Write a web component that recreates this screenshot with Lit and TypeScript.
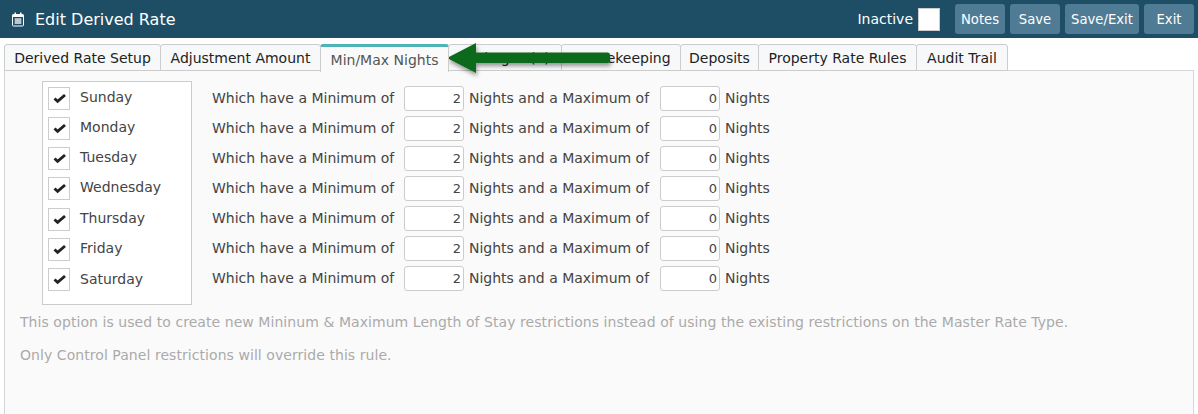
import { LitElement, html, css, svg } from "lit";
import { customElement } from "lit/decorators.js";

const days = ["Sunday", "Monday", "Tuesday", "Wednesday", "Thursday", "Friday", "Saturday"];
const tabs: [string, number][] = [["Derived Rate Setup", 157], ["Adjustment Amount", 161], ["Min/Max Nights", 129], ["Packages (1)", 114], ["Housekeeping", 120], ["Deposits", 79], ["Property Rate Rules", 159], ["Audit Trail", 92]];

@customElement("app-root")
export class AppRoot extends LitElement {
  static styles = css`
    :host { display: block; height: 414px; overflow: hidden; background: #fff; position: relative; font-family: "DejaVu Sans", Verdana, sans-serif; font-size: 14px; color: #333; }
    .header { height: 38px; background: #1d4e66; display: flex; align-items: center; color: #fff; padding: 0 4px 0 11px; box-sizing: border-box; }
    .cal { width: 14px; height: 15px; margin-right: 10px; }
    .title { font-size: 16px; flex: 1; }
    .inactive { font-size: 14px; margin-right: 5px; }
    .ibox { width: 22px; height: 23px; background: #fff; border: 1px solid #ccc; box-sizing: border-box; margin-right: 10px; }
    .btn { height: 30px; background: #4f7c94; border-radius: 3px; font-size: 13.2px; display: flex; align-items: center; justify-content: center; margin-left: 5px; color: #fff; }
    .tabs { display: flex; padding: 5px 0 0 4px; height: 33px; box-sizing: border-box; align-items: flex-end; position: relative; }
    .tab { height: 27px; box-sizing: border-box; border: 1px solid #ccc; border-radius: 3px 3px 0 0; background: #f7f8fa; color: #222; justify-content: center; display: flex; align-items: center; white-space: nowrap; margin-right: -1px; }
    .tab.active { height: 28px; background: #fafafa; color: #555; border-top: 3px solid #4fb3b8; border-bottom: none; position: relative; z-index: 1; margin-bottom: -1px; padding-top: 1px; }
    .panel { margin: -1px 0 0 4px; width: 1190px; height: 346px; box-sizing: border-box; border: 1px solid #d4d6dc; background: #fafafa; padding: 10px 0 0 37px; }
    .top { display: flex; }
    .days { width: 150px; height: 224px; background: #fff; border: 1px solid #ccc; box-sizing: border-box; padding: 5px 0 0 5px; }
    .day { height: 30px; display: flex; }
    .day:nth-child(4) { height: 31px; }
    .day:nth-child(7) .dayname { padding-top: 1px; }
    .check { width: 22px; height: 23px; box-sizing: border-box; border: 1px solid #ccc; background: #fff; }
    .check svg { display: block; width: 20px; height: 21px; }
    .dayname { margin-left: 10px; line-height: 21px; color: #444; }
    .rows { margin-left: 20px; padding-top: 2px; }
    .row { height: 30px; display: flex; align-items: center; white-space: nowrap; color: #444; }
    .w1 { width: 192px; }
    .input { width: 60px; height: 25px; box-sizing: border-box; border: 1px solid #ccc; border-radius: 3px; background: #fff; text-align: right; padding-right: 2px; line-height: 23px; font-size: 13px; color: #444; }
    .w2 { width: 196px; padding-left: 5px; box-sizing: border-box; }
    .nights { margin-left: 5px; }
    .note { color: #aaa; margin: 9px 0 0 -22px; line-height: 17px; letter-spacing: .06px; white-space: nowrap; }
    .note + .note { margin-top: 16px; }
    .arrow { position: absolute; left: 444px; top: 40px; width: 175px; height: 46px; }
  `;

  render() {
    return html`
      <div class="header">
        <svg class="cal" viewBox="0 0 14 15" fill="none"><rect x="1.5" y="2.5" width="11" height="11.5" rx="1" stroke="#fff"/><rect x="1.5" y="2.5" width="11" height="2.5" fill="#fff"/><rect x="3.5" y="0.5" width="1.5" height="3" fill="#fff"/><rect x="9" y="0.5" width="1.5" height="3" fill="#fff"/><path d="M3.5 7h7M3.5 9h7M3.5 11h7M5 6.5v5.5M7 6.5v5.5M9 6.5v5.5" stroke="#fff" stroke-width=".9"/></svg>
        <div class="title">Edit Derived Rate</div>
        <div class="inactive">Inactive</div>
        <div class="ibox"></div>
        ${[["Notes", 50], ["Save", 50], ["Save/Exit", 74], ["Exit", 50]].map(([t, w]) => html`<div class="btn" style="width:${w}px">${t}</div>`)}
      </div>
      <div class="tabs">
        ${tabs.map(([t, w]) => html`<div class="tab ${t === "Min/Max Nights" ? "active" : ""}" style="width:${w}px">${t}</div>`)}
      </div>
      <div class="panel">
        <div class="top">
          <div class="days">
            ${days.map((d) => html`<div class="day"><div class="check"><svg viewBox="0 0 20 21"><path d="M5.5 10.5 8.6 13.3 16 7" fill="none" stroke="#222" stroke-width="2.9"/></svg></div><div class="dayname">${d}</div></div>`)}
          </div>
          <div class="rows">
            ${days.map(() => html`<div class="row"><div class="w1">Which have a Minimum of</div><div class="input">2</div><div class="w2">Nights and a Maximum of</div><div class="input">0</div><div class="nights">Nights</div></div>`)}
          </div>
        </div>
        <div class="note">This option is used to create new Mininum &amp; Maximum Length of Stay restrictions instead of using the existing restrictions on the Master Rate Type.</div>
        <div class="note">Only Control Panel restrictions will override this rule.</div>
      </div>
      <svg class="arrow" viewBox="0 0 175 46">
        <defs><filter id="s" x="-10%" y="-30%" width="120%" height="170%"><feDropShadow dx="1" dy="3" stdDeviation="2" flood-color="#000" flood-opacity=".4"/></filter></defs>
        ${svg`<path d="M3 18 32 3V12.5H164Q166 12.5 166 15V20.5Q166 23 164 23H32V33Z" fill="#0f6b1c" filter="url(#s)"/>`}
      </svg>
    `;
  }
}
